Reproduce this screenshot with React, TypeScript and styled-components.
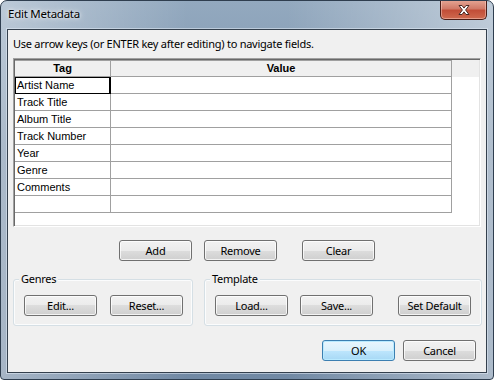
import React from "react";
import styled, { createGlobalStyle } from "styled-components";

const GlobalStyle = createGlobalStyle`
  html, body {
    margin: 0;
    padding: 0;
    background: #ffffff;
  }
  * {
    box-sizing: border-box;
  }
`;

const uiFont = `"Noto Sans", "Open Sans", sans-serif`;
const gridFont = `"Liberation Sans", Arial, sans-serif`;

const Window = styled.div`
  width: 494px;
  height: 380px;
  display: flex;
  flex-direction: column;
  border: 1px solid #2f3e4f;
  border-radius: 7px 7px 4px 4px;
  overflow: hidden;
  background:
    linear-gradient(to right, rgba(255, 255, 255, 0.38), rgba(255, 255, 255, 0) 38%, rgba(255, 255, 255, 0) 58%, rgba(255, 255, 255, 0.42)),
    linear-gradient(#93a9bf, #7890aa 40%, #7189a4);
  font-family: ${uiFont};
  letter-spacing: -0.25px;
`;

const TitleBar = styled.div`
  height: 28px;
  flex: none;
  display: flex;
  align-items: flex-start;
`;

const Title = styled.div`
  padding: 5px 0 0 7px;
  font-size: 11.5px;
  line-height: 16px;
  color: #000;
  text-shadow: 0 0 6px rgba(255, 255, 255, 0.9), 0 0 3px rgba(255, 255, 255, 0.8);
`;

const CloseButton = styled.div`
  margin: -1px 6px 0 auto;
  width: 47px;
  height: 20px;
  display: flex;
  align-items: center;
  justify-content: center;
  border: 1px solid #4a1d17;
  border-top: none;
  border-radius: 0 0 5px 5px;
  background: linear-gradient(#e6a796, #d07a68 45%, #c24e38 55%, #cf6a4f);
  box-shadow: inset 0 0 0 1px rgba(255, 220, 210, 0.45);
`;

const Client = styled.div`
  flex: 1;
  margin: 0 6px 6px 6px;
  border: 1px solid #34404d;
  box-shadow: 0 0 0 1px rgba(225, 235, 245, 0.55);
  background: #f0f0f0;
  padding: 0 5px;
  display: flex;
  flex-direction: column;
`;

const Hint = styled.div`
  margin-top: 6px;
  font-size: 11px;
  line-height: 15px;
  color: #000;
`;

const TableBox = styled.div`
  margin-top: 7px;
  height: 169px;
  border-style: solid;
  border-width: 1px;
  border-color: #a0a0a0 #ffffff #ffffff #a0a0a0;
  box-shadow: inset 1px 1px 0 #696969, inset -1px -1px 0 #e3e3e3;
  padding: 1px;
  background: #ffffff;
  font-family: ${gridFont};
  font-size: 11px;
  letter-spacing: 0;
  color: #000;
`;

const HeaderRow = styled.div`
  display: flex;
  height: 17px;
  background: #f0f0f0;
`;

const HeaderCell = styled.div<{ $w: number }>`
  width: ${({ $w }) => $w}px;
  height: 17px;
  border-top: 1px solid #a0a0a0;
  border-right: 1px solid #a0a0a0;
  border-bottom: 1px solid #a0a0a0;
  text-align: center;
  font-weight: bold;
  line-height: 15px;
`;

const Row = styled.div`
  display: flex;
  height: 17px;
`;

const Cell = styled.div<{ $w: number; $focus?: boolean }>`
  width: ${({ $w }) => $w}px;
  height: 17px;
  border-right: 1px solid #a0a0a0;
  border-bottom: 1px solid #a0a0a0;
  padding-left: 2px;
  line-height: 16px;
  white-space: nowrap;
  outline: ${({ $focus }) => ($focus ? "1px solid #000" : "none")};
  outline-offset: -1px;
  box-shadow: ${({ $focus }) => ($focus ? "inset -1px 0 0 #000" : "none")};
`;

const ButtonRow = styled.div`
  margin-top: 13px;
  display: flex;
  gap: 12px;
  padding-left: 106px;

  & > :last-child {
    margin-left: 13px;
  }
`;

const Button = styled.button<{ $primary?: boolean; $gap?: number }>`
  width: 73px;
  height: 21px;
  padding: 0;
  flex: none;
  margin-left: ${({ $gap }) => $gap ?? 0}px;
  border: 1px solid ${({ $primary }) => ($primary ? "#3c7fb1" : "#707070")};
  border-radius: 3px;
  background: ${({ $primary }) =>
    $primary
      ? "linear-gradient(#eaf6fd, #d9f0fc 50%, #bee6fd 50%, #a7d9f5)"
      : "linear-gradient(#f2f2f2, #ebebeb 50%, #dddddd 50%, #cfcfcf)"};
  box-shadow: inset 0 0 0 1px ${({ $primary }) => ($primary ? "#b9eaff" : "rgba(255,255,255,0.75)")};
  font-family: ${uiFont};
  font-size: 11px;
  letter-spacing: -0.25px;
  line-height: 17px;
  color: #000;
`;

const GroupRow = styled.div`
  margin-top: 18px;
  display: flex;
  gap: 11px;
`;

const Group = styled.div<{ $w: number }>`
  position: relative;
  width: ${({ $w }) => $w}px;
  height: 47px;
  border: 1px solid #d5dfe5;
  border-radius: 3px;
  box-shadow: inset 0 0 0 1px #fbfcfd;
  padding: 15px 10px 0 10px;
  display: flex;
`;

const Legend = styled.span`
  position: absolute;
  top: -9px;
  left: 5px;
  padding: 0 2px;
  background: #f0f0f0;
  font-size: 11px;
  line-height: 16px;
  color: #000;
`;

const Footer = styled.div`
  margin-top: 14px;
  display: flex;
  justify-content: flex-end;
  gap: 8px;
  padding-right: 5px;
`;

const tags = ["Artist Name", "Track Title", "Album Title", "Track Number", "Year", "Genre", "Comments", ""];

export default function App() {
  return (
    <>
      <GlobalStyle />
      <Window>
        <TitleBar>
          <Title>Edit Metadata</Title>
          <CloseButton>
            <svg width="14" height="12" viewBox="0 0 14 12">
              <path
                d="M2 1.5h3l2 2.6 2-2.6h3L8.6 6 12 10.5H9L7 7.9 5 10.5H2L5.4 6z"
                fill="#ffffff"
                stroke="#4b2a24"
                strokeWidth="1"
                strokeLinejoin="round"
              />
            </svg>
          </CloseButton>
        </TitleBar>
        <Client>
          <Hint>Use arrow keys (or ENTER key after editing) to navigate fields.</Hint>
          <TableBox>
            <HeaderRow>
              <HeaderCell $w={96}>Tag</HeaderCell>
              <HeaderCell $w={341}>Value</HeaderCell>
            </HeaderRow>
            {tags.map((t, i) => (
              <Row key={i}>
                <Cell $w={96} $focus={i === 0}>{t}</Cell>
                <Cell $w={341} />
              </Row>
            ))}
          </TableBox>
          <ButtonRow>
            <Button>Add</Button>
            <Button>Remove</Button>
            <Button>Clear</Button>
          </ButtonRow>
          <GroupRow>
            <Group $w={180}>
              <Legend>Genres</Legend>
              <Button>Edit...</Button>
              <Button $gap={13}>Reset...</Button>
            </Group>
            <Group $w={278}>
              <Legend>Template</Legend>
              <Button>Load...</Button>
              <Button $gap={12}>Save...</Button>
              <Button $gap={25}>Set Default</Button>
            </Group>
          </GroupRow>
          <Footer>
            <Button $primary>OK</Button>
            <Button>Cancel</Button>
          </Footer>
        </Client>
      </Window>
    </>
  );
}
